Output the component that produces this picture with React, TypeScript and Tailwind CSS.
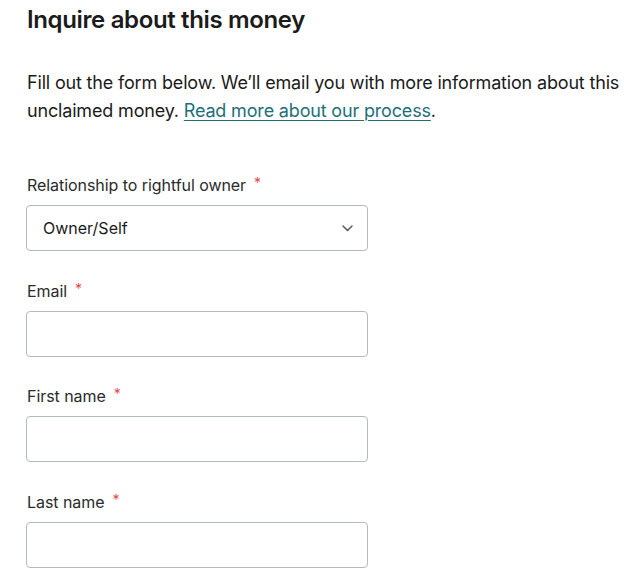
import React from "react";

function Label({ children }: { children: React.ReactNode }) {
  return (
    <label className="flex h-6 items-center text-[16px] leading-6 tracking-[-0.06px] text-[#2b2b2b]">
      <span>{children}</span>
      <span className="ml-[8px] self-start pt-[3px] text-[14px] leading-[14px] text-[#e5484d]">*</span>
    </label>
  );
}

function TextField({ label }: { label: string }) {
  return (
    <div className="flex flex-col gap-2">
      <Label>{label}</Label>
      <input
        type="text"
        className="h-[46px] w-[342px] rounded-[4px] border border-[#b5b9c1] bg-white px-4 text-[16px] outline-none"
      />
    </div>
  );
}

export default function App() {
  return (
    <div className="min-h-[584px] w-[624px] bg-white pl-[27px] pt-[4px] text-[#1b1b1b]" style={{ fontFamily: "Inter, sans-serif" }}>
      <h1 className="text-[24px] font-semibold leading-8 tracking-[-0.36px] text-[#1b1b1b]">
        Inquire about this money
      </h1>
      <p className="mt-[33px] w-[596px] text-[18px] leading-7 tracking-[-0.17px] text-[#1b1b1b]">
        Fill out the form below. We’ll email you with more information about this unclaimed money.{" "}
        <a href="#" className="text-[#1e6f7a] underline decoration-1 underline-offset-[3px]">
          Read more about our process
        </a>
        .
      </p>

      <div className="ml-[-1px] mt-[48px] flex flex-col gap-[27.5px]">
        <div className="flex flex-col gap-2">
          <div className="pl-[1px]">
            <Label>Relationship to rightful owner</Label>
          </div>
          <div className="flex h-[46px] w-[342px] items-center justify-between rounded-[4px] border border-[#b5b9c1] bg-white pl-4 pr-[14px]">
            <span className="text-[16px] text-[#1b1b1b]">Owner/Self</span>
            <svg width="11" height="7" viewBox="0 0 11 7" fill="none">
              <path d="M1 1l4.5 4.5L10 1" stroke="#565c65" strokeWidth="1.5" strokeLinecap="round" strokeLinejoin="round" />
            </svg>
          </div>
        </div>
        <div className="pl-[1px] [&_input]:ml-[-1px]">
          <TextField label="Email" />
        </div>
        <div className="pl-[1px] [&_input]:ml-[-1px]">
          <TextField label="First name" />
        </div>
        <div className="pl-[1px] [&_input]:ml-[-1px]">
          <TextField label="Last name" />
        </div>
      </div>
    </div>
  );
}
